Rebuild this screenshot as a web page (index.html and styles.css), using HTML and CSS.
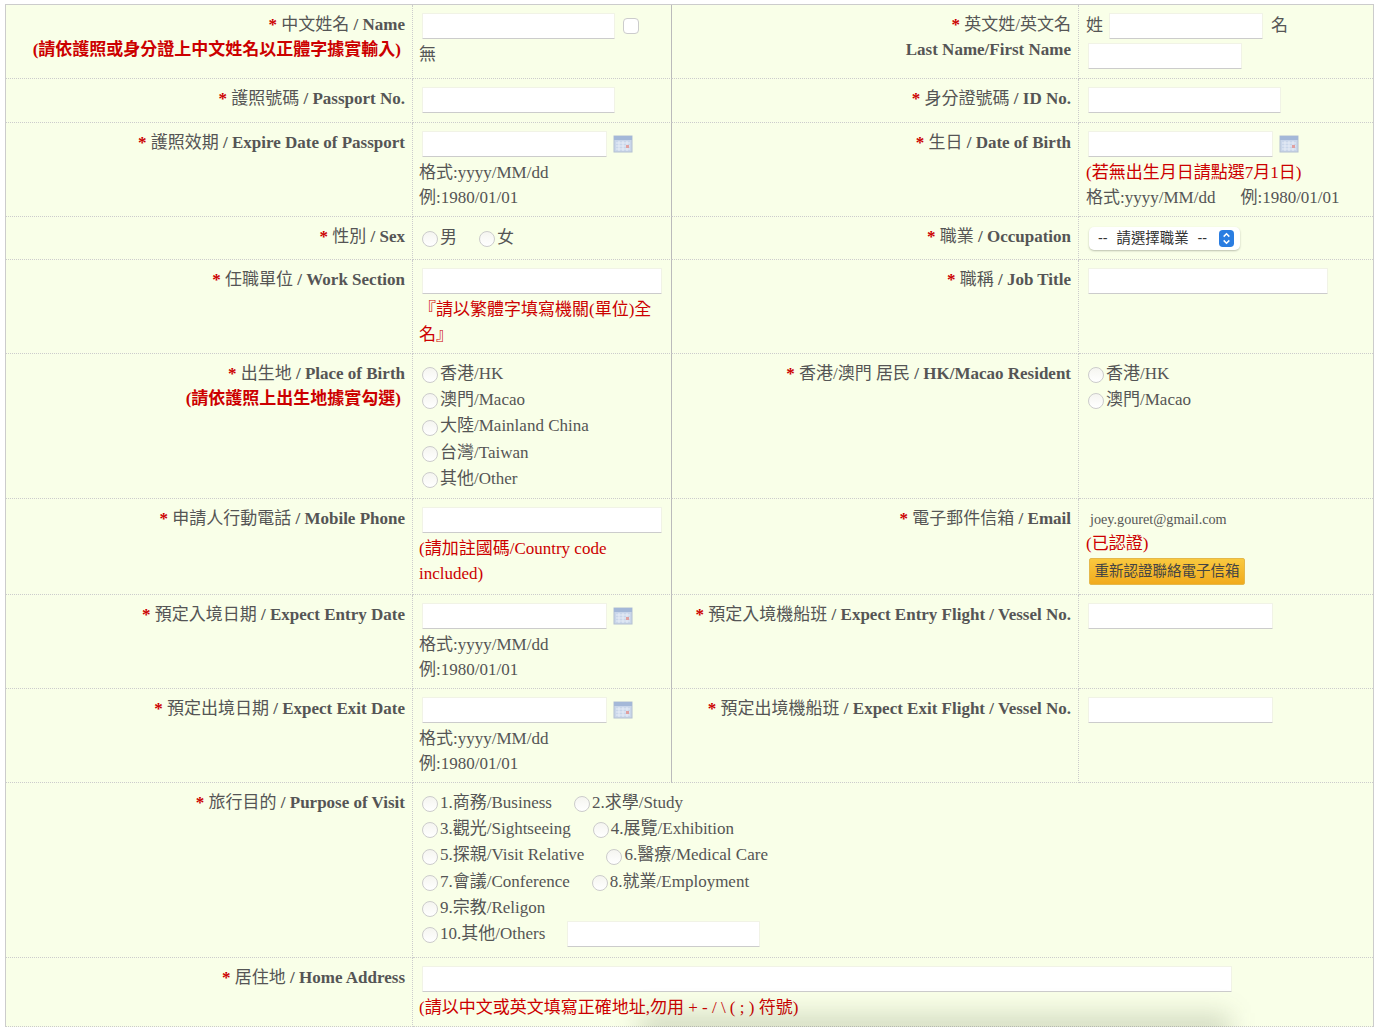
FILE: index.html
```html
<!DOCTYPE html>
<html lang="zh-Hant">
<head>
<meta charset="utf-8">
<title>Form</title>
<link rel="stylesheet" href="styles.css">
</head>
<body>
<main class="page">
<table class="form">
<colgroup><col class="c1"><col class="c2"><col class="c3"><col class="c4"></colgroup>
<tr class="r1">
  <th><div class="ln"><i>*</i> 中文姓名 <b>/ Name</b></div><div class="ln red note"><b>(請依護照或身分證上中文姓名以正體字據實輸入)</b></div></th>
  <td class="mid"><div class="field"><input class="w193" type="text"><input class="check" type="checkbox"></div><div class="ln">無</div></td>
  <th><div class="ln"><i>*</i> 英文姓/英文名</div><div class="ln"><b>Last Name/First Name</b></div></th>
  <td><div class="field namef"><span>姓</span><input class="w154" type="text"><span class="given">名</span></div><div class="field"><input class="w154" type="text"></div></td>
</tr>
<tr>
  <th><div class="ln"><i>*</i> 護照號碼 <b>/ Passport No.</b></div></th>
  <td class="mid"><div class="field"><input class="w193" type="text"></div></td>
  <th><div class="ln"><i>*</i> 身分證號碼 <b>/ ID No.</b></div></th>
  <td><div class="field"><input class="w193" type="text"></div></td>
</tr>
<tr>
  <th><div class="ln"><i>*</i> 護照效期 <b>/ Expire Date of Passport</b></div></th>
  <td class="mid"><div class="field"><input class="w185" type="text"><svg class="cal" viewBox="0 0 20 18"><use href="#cal"/></svg></div><div class="ln">格式:yyyy/MM/dd</div><div class="ln">例:1980/01/01</div></td>
  <th><div class="ln"><i>*</i> 生日 <b>/ Date of Birth</b></div></th>
  <td><div class="field"><input class="w185" type="text"><svg class="cal" viewBox="0 0 20 18"><use href="#cal"/></svg></div><div class="ln red">(若無出生月日請點選7月1日)</div><div class="ln">格式:yyyy/MM/dd<span class="eg">例:1980/01/01</span></div></td>
</tr>
<tr class="r4">
  <th><div class="ln"><i>*</i> 性別 <b>/ Sex</b></div></th>
  <td class="mid"><div class="rl"><label><input type="radio" name="sex">男</label><label><input type="radio" name="sex">女</label></div></td>
  <th><div class="ln"><i>*</i> 職業 <b>/ Occupation</b></div></th>
  <td><div class="select">-- 請選擇職業 --<svg class="step" viewBox="0 0 16 18"><rect width="16" height="18" rx="4" fill="#2a7de1"/><path d="M5 7l3-3 3 3M5 11l3 3 3-3" fill="none" stroke="#fff" stroke-width="1.6"/></svg></div></td>
</tr>
<tr>
  <th><div class="ln"><i>*</i> 任職單位 <b>/ Work Section</b></div></th>
  <td class="mid"><div class="field"><input class="w240" type="text"></div><div class="ln red">『請以繁體字填寫機關(單位)全名』</div></td>
  <th><div class="ln"><i>*</i> 職稱 <b>/ Job Title</b></div></th>
  <td><div class="field"><input class="w240" type="text"></div></td>
</tr>
<tr class="radios">
  <th><div class="ln"><i>*</i> 出生地 <b>/ Place of Birth</b></div><div class="ln red note"><b>(請依護照上出生地據實勾選)</b></div></th>
  <td class="mid">
    <div class="rl"><label><input type="radio" name="pob">香港/HK</label></div>
    <div class="rl"><label><input type="radio" name="pob">澳門/Macao</label></div>
    <div class="rl"><label><input type="radio" name="pob">大陸/Mainland China</label></div>
    <div class="rl"><label><input type="radio" name="pob">台灣/Taiwan</label></div>
    <div class="rl"><label><input type="radio" name="pob">其他/Other</label></div>
  </td>
  <th><div class="ln"><i>*</i> 香港/澳門 居民 <b>/ HK/Macao Resident</b></div></th>
  <td>
    <div class="rl"><label><input type="radio" name="res">香港/HK</label></div>
    <div class="rl"><label><input type="radio" name="res">澳門/Macao</label></div>
  </td>
</tr>
<tr>
  <th><div class="ln"><i>*</i> 申請人行動電話 <b>/ Mobile Phone</b></div></th>
  <td class="mid"><div class="field"><input class="w240" type="text"></div><div class="ln red">(請加註國碼/Country code included)</div></td>
  <th><div class="ln"><i>*</i> 電子郵件信箱 <b>/ Email</b></div></th>
  <td><div class="email">joey.gouret@gmail.com</div><div class="ln red">(已認證)</div><button class="btn" type="button">重新認證聯絡電子信箱</button></td>
</tr>
<tr>
  <th><div class="ln"><i>*</i> 預定入境日期 <b>/ Expect Entry Date</b></div></th>
  <td class="mid"><div class="field"><input class="w185" type="text"><svg class="cal" viewBox="0 0 20 18"><use href="#cal"/></svg></div><div class="ln">格式:yyyy/MM/dd</div><div class="ln">例:1980/01/01</div></td>
  <th><div class="ln"><i>*</i> 預定入境機船班 <b>/ Expect Entry Flight / Vessel No.</b></div></th>
  <td><div class="field"><input class="w185" type="text"></div></td>
</tr>
<tr>
  <th><div class="ln"><i>*</i> 預定出境日期 <b>/ Expect Exit Date</b></div></th>
  <td class="mid"><div class="field"><input class="w185" type="text"><svg class="cal" viewBox="0 0 20 18"><use href="#cal"/></svg></div><div class="ln">格式:yyyy/MM/dd</div><div class="ln">例:1980/01/01</div></td>
  <th><div class="ln"><i>*</i> 預定出境機船班 <b>/ Expect Exit Flight / Vessel No.</b></div></th>
  <td><div class="field"><input class="w185" type="text"></div></td>
</tr>
<tr class="radios purpose">
  <th><div class="ln"><i>*</i> 旅行目的 <b>/ Purpose of Visit</b></div></th>
  <td colspan="3">
    <div class="rl"><label><input type="radio" name="pv">1.商務/Business</label><label><input type="radio" name="pv">2.求學/Study</label></div>
    <div class="rl"><label><input type="radio" name="pv">3.觀光/Sightseeing</label><label><input type="radio" name="pv">4.展覽/Exhibition</label></div>
    <div class="rl"><label><input type="radio" name="pv">5.探親/Visit Relative</label><label><input type="radio" name="pv">6.醫療/Medical Care</label></div>
    <div class="rl"><label><input type="radio" name="pv">7.會議/Conference</label><label><input type="radio" name="pv">8.就業/Employment</label></div>
    <div class="rl"><label><input type="radio" name="pv">9.宗教/Religon</label></div>
    <div class="rl"><label class="other"><input type="radio" name="pv">10.其他/Others</label><input class="w193" type="text"></div>
  </td>
</tr>
<tr>
  <th><div class="ln"><i>*</i> 居住地 <b>/ Home Address</b></div></th>
  <td colspan="3"><div class="field"><input class="w810" type="text"></div><div class="ln red">(請以中文或英文填寫正確地址,勿用 + - / \ ( ; ) 符號)</div></td>
</tr>
</table>
<div class="shadow"></div>
</main>
<svg class="defs" width="0" height="0">
  <symbol id="cal" viewBox="0 0 20 18">
    <rect x="1" y="1" width="18" height="16" fill="#c9d6ea" stroke="#b4c0d2"/>
    <rect x="1" y="1" width="18" height="4" fill="#a4b8d8"/>
    <path d="M3 8h14M3 11h14M3 14h14M6 6v10M10 6v10M14 6v10" stroke="#e6ecf6" stroke-width="1"/>
    <rect x="13" y="10" width="3" height="3" fill="#e0a0a0"/>
  </symbol>
</svg>
</body>
</html>
```
FILE: styles.css
```css
* { box-sizing: border-box; }
html, body { margin: 0; padding: 0; background: #fff; }
body {
  font-family: "Liberation Serif", "Noto Sans CJK TC", serif;
  font-size: 17px;
  color: #555;
}
.page {
  position: relative;
  height: 1027px;
  padding: 4px 0 0 5px;
  overflow: hidden;
}
.form {
  width: 1369px;
  table-layout: fixed;
  border-collapse: separate;
  border-spacing: 0;
  background: #f9ffe8;
  border: solid #ccc;
  border-width: 1px 1px 0;
}
.c1, .c3 { width: 407px; }
.c2 { width: 259px; }
.c4 { width: 294px; }
th, td {
  vertical-align: top;
  padding: 8px 7px 6px;
  border-bottom: 1px dotted #ccc;
  font-weight: normal;
  line-height: 25px;
}
th { text-align: right; border-right: 1px dotted #ccc; padding-top: 7px; }
th b { font-weight: bold; }
td.mid, td[colspan] { padding-left: 6px; }
td.mid { border-right: 1px solid #bbb; }
i { font-style: normal; font-weight: bold; color: #c00; }
.red { color: #c00; }
.note { padding-right: 4px; }
.ln { min-height: 25px; }
.field { display: flex; align-items: flex-start; height: 29px; padding-left: 3px; }
tr > td:nth-child(4) .field { padding-left: 2px; }
tr > td:nth-child(4) .namef { height: 30px; padding-left: 0; }
.namef input { margin-left: 6px; }
.given { margin-left: 8px; }
input[type="text"] {
  height: 26px;
  padding: 0 4px;
  background: #fff;
  border: 1px solid #f1f3e6;
  border-bottom: 1px solid #ccc;
  border-radius: 1px;
}
.w154 { width: 154px; }
.w185 { width: 185px; }
.w193 { width: 193px; }
.w240 { width: 240px; }
.w810 { width: 810px; }
.check {
  appearance: none;
  width: 16px;
  height: 16px;
  margin: 5px 0 0 8px;
  background: #fff;
  border: 1px solid #ccc;
  border-radius: 4px;
}
.cal { width: 20px; height: 18px; margin: 4px 0 0 6px; }
.eg { margin-left: 25px; }
.rl { display: flex; align-items: center; min-height: 26.2px; line-height: 26.2px; }
.rl label { display: inline-flex; align-items: center; margin-right: 19px; }
.rl label.other { margin-right: 22px; }
.rl input[type="radio"] {
  appearance: none;
  width: 16px;
  height: 16px;
  margin: 2px 2px 0 3px;
  background: linear-gradient(#f5f5f0, #fff);
  border: 1px solid #ccc;
  border-radius: 50%;
}
tr > td:nth-child(4) .rl input[type="radio"] { margin-left: 2px; }
td .rl:first-child { margin-top: -1px; }
.r4 td.mid { padding-top: 9px; }
.r4 td, .r4 th { height: 43px; }
.select {
  display: flex;
  align-items: center;
  justify-content: space-between;
  width: 151px;
  height: 23px;
  margin: 2px 0 0 3px;
  padding: 0 6px 0 9px;
  background: #fff;
  border-radius: 5px;
  box-shadow: 0 1px 2px rgba(0,0,0,.25);
  font: 14.4px/23px "Liberation Sans", "Noto Sans CJK TC", sans-serif;
  word-spacing: 5px;
  color: #333;
}
.step { width: 15px; height: 17px; }
.email { font-size: 14.2px; line-height: 24px; padding-left: 4px; }
.btn {
  display: block;
  width: 156px;
  height: 27px;
  margin: 2px 0 3px 3px;
  padding: 0 0 1px;
  background: linear-gradient(#f9c93f, #f1ab1d);
  border: 1px solid #e5b84a;
  border-radius: 2px;
  font: 14.5px/25px "Liberation Sans", "Noto Sans CJK TC", sans-serif;
  color: #444;
}
.radios td { padding-bottom: 6px; }
.radios.purpose td { padding-bottom: 10px; }
.defs { position: absolute; }
.shadow {
  position: absolute;
  left: 640px;
  width: 590px;
  bottom: -20px;
  height: 34px;
  background: rgba(60, 70, 40, .18);
  filter: blur(12px);
  pointer-events: none;
}
```
